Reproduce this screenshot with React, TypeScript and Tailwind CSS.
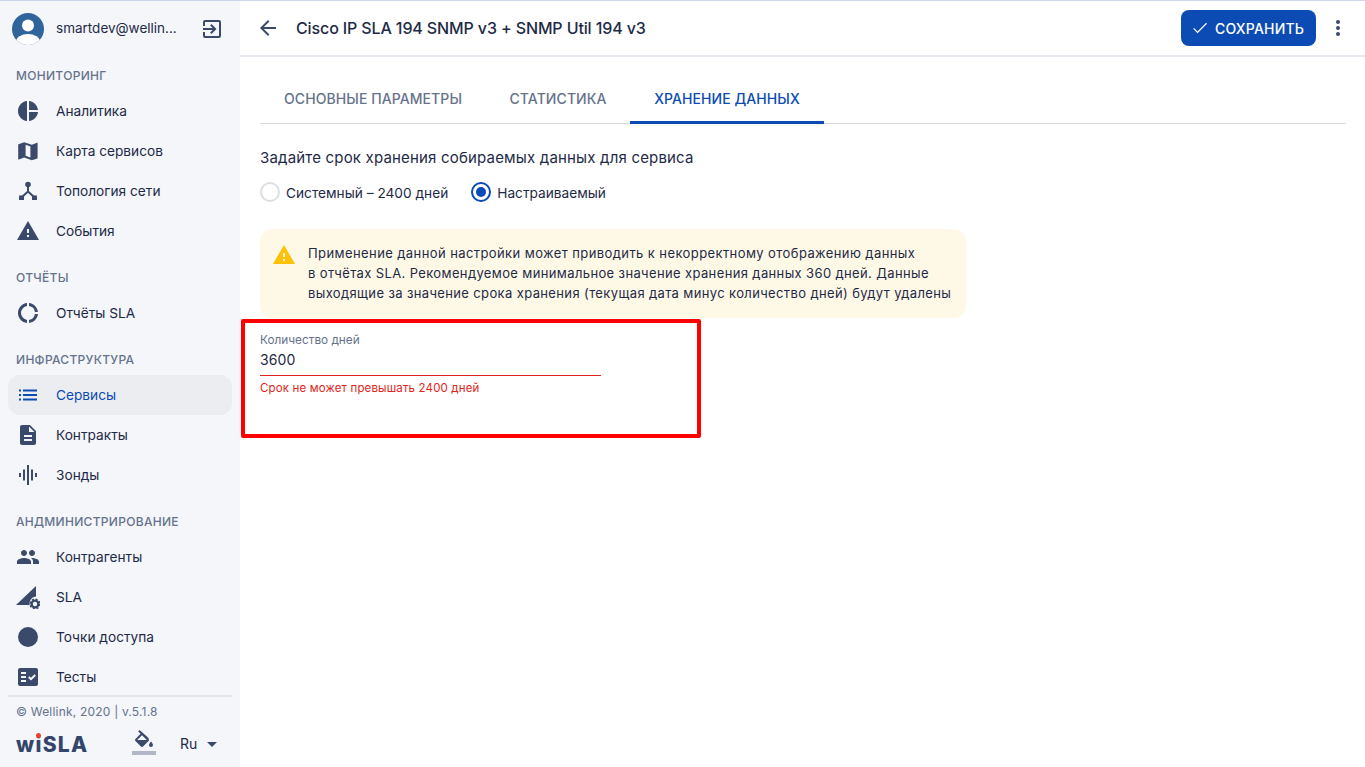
import React from "react";

const C = "#3b4a6b";

const P = ({ d }: { d: string }) => <path d={d} fill={C} />;
const I = ({ children, size = 24 }: { children: React.ReactNode; size?: number }) => (
  <svg width={size} height={size} viewBox="0 0 24 24" className="shrink-0">{children}</svg>
);

const icons: Record<string, React.ReactNode> = {
  pie: <I><P d="M11 2v20c-5.07-.5-9-4.79-9-10s3.93-9.5 9-10zm2.03 0v8.99H22c-.47-4.74-4.24-8.52-8.97-8.99zm0 11.01V22c4.74-.47 8.5-4.25 8.97-8.99h-8.97z" /></I>,
  map: <I><P d="M2.5 5.2 8.2 3.2 15.8 5.8 21 3.8c.3-.1.6.1.6.4V19c0 .2-.1.4-.3.5l-5.5 1.7-7.6-2.7-5.3 2c-.3.1-.7-.1-.7-.5V5.7c0-.2.1-.4.3-.5zM9.6 5.8v11l4.8 1.6V7.4z" /></I>,
  topo: <I><circle cx="12" cy="5.5" r="2.8" fill={C} /><path d="M12 7v5.5M12 12.5 6 18M12 12.5 18 18" stroke={C} strokeWidth="2" fill="none" /><rect x="3" y="16.5" width="5" height="4.5" fill={C} /><rect x="16" y="16.5" width="5" height="4.5" fill={C} /></I>,
  warn: <I><P d="M1 21h22L12 2 1 21zm12-3h-2v-2h2v2zm0-4h-2v-4h2v4z" /></I>,
  donut: <I><path d="M11 2.05v3.02A7 7 0 0 0 5 12a7 7 0 0 0 6 6.93v3.02C5.95 21.45 2 17.19 2 12S5.95 2.55 11 2.05zM13 2.05c4.72.47 8.48 4.23 8.95 8.95h-3.02A7 7 0 0 0 13 5.07V2.05zM18.93 13h3.02c-.47 4.72-4.23 8.48-8.95 8.95v-3.02A7 7 0 0 0 18.93 13z" fill={C} /></I>,
  list: <I><path d="M3 6.5h2v2H3zM3 11h2v2H3zM3 15.5h2v2H3zM7 6.5h14v2H7zM7 11h14v2H7zM7 15.5h14v2H7z" fill="#0b4bb3" /></I>,
  doc: <I><P d="M14 2H6c-1.1 0-2 .9-2 2v16c0 1.1.9 2 2 2h12c1.1 0 2-.9 2-2V8l-6-6zm2 16H8v-2h8v2zm0-4H8v-2h8v2zm-3-5V3.5L18.5 9H13z" /></I>,
  wave: <I><path d="M3 10h2v4H3zM7 6.5h2v11H7zM11 2h2v20h-2zM15 6.5h2v11h-2zM19 10h2v4h-2z" fill={C} /></I>,
  people: <I><P d="M16 11c1.66 0 2.99-1.34 2.99-3S17.66 5 16 5s-3 1.34-3 3 1.34 3 3 3zm-8 0c1.66 0 2.99-1.34 2.99-3S9.66 5 8 5 5 6.34 5 8s1.34 3 3 3zm0 2c-2.33 0-7 1.17-7 3.5V19h14v-2.5C15 14.17 10.33 13 8 13zm8 0c-.29 0-.62.02-.97.05 1.16.84 1.97 1.97 1.97 3.45V19h6v-2.5c0-2.33-4.67-3.5-7-3.5z" /></I>,
  sla: <I><path d="M20 1V11.5a7 7 0 0 0-6.4 8.5H0z" fill={C} /><circle cx="19" cy="19" r="3.4" fill="none" stroke={C} strokeWidth="2.4" /><circle cx="19" cy="19" r="4.8" fill="none" stroke={C} strokeWidth="1.6" strokeDasharray="2 1.77" /></I>,
  circle: <I><circle cx="12" cy="12" r="10" fill={C} /></I>,
  tests: <I><path d="M4 3h16a2 2 0 0 1 2 2v14a2 2 0 0 1-2 2H4a2 2 0 0 1-2-2V5a2 2 0 0 1 2-2z" fill={C} /><path d="M5 7h5v2H5zM5 11h5v2H5zM5 15h5v2H5z" fill="#f4f6f9" /><path d="m12.8 12 2.2 2.2 4.2-4.2" stroke="#f4f6f9" strokeWidth="2" fill="none" /></I>,
};

const Item = ({ icon, label, active }: { icon: string; label: string; active?: boolean }) => (
  <div className={`flex h-10 items-center rounded-xl pl-2 ${active ? "bg-[#ecedf1] text-[#0b4bb3]" : "text-[#1e2a47]"}`}>
    <span className="flex w-10 justify-start">{icons[icon]}</span>
    <span className="text-[13.7px]">{label}</span>
  </div>
);

const Section = ({ title, children }: { title: string; children: React.ReactNode }) => (
  <div>
    <div className="flex h-[22px] items-center pl-2 text-[12px] font-medium tracking-[0.3px] text-[#66728c]">{title}</div>
    <div className="mt-[4px]">{children}</div>
  </div>
);

export default function App() {
  return (
    <div className="relative flex h-[767px] w-[1365px] overflow-hidden border-t-[1px] border-[#c9d5e8] bg-white font-['Inter','Noto_Sans',sans-serif] text-[#1e2a47]">
      <aside className="flex w-[240px] shrink-0 flex-col bg-[#f4f6f9] px-2">
        <div className="flex h-[55px] shrink-0 items-center pl-1">
          <svg width="32" height="32" viewBox="0 0 32 32" className="shrink-0">
            <defs><clipPath id="av"><circle cx="16" cy="16" r="16" /></clipPath></defs>
            <circle cx="16" cy="16" r="16" fill="#2f659c" />
            <g clipPath="url(#av)">
              <circle cx="16" cy="12.5" r="6" fill="#fff" />
              <ellipse cx="16" cy="29" rx="12" ry="8" fill="#fff" />
            </g>
          </svg>
          <span className="ml-3 w-[122px] whitespace-nowrap text-[13.5px]">smartdev@wellin...</span>
          <svg width="24" height="24" viewBox="0 0 24 24" className="ml-[22px] shrink-0">
            <path d="M10.09 15.59 11.5 17l5-5-5-5-1.41 1.41L12.67 11H3v2h9.67l-2.58 2.59zM19 3H5a2 2 0 0 0-2 2v4h2V5h14v14H5v-4H3v4a2 2 0 0 0 2 2h14a2 2 0 0 0 2-2V5a2 2 0 0 0-2-2z" fill={C} />
          </svg>
        </div>
        <div className="mt-[9px] flex flex-col gap-4">
          <Section title="МОНИТОРИНГ">
            <Item icon="pie" label="Аналитика" />
            <Item icon="map" label="Карта сервисов" />
            <Item icon="topo" label="Топология сети" />
            <Item icon="warn" label="События" />
          </Section>
          <Section title="ОТЧЁТЫ">
            <Item icon="donut" label="Отчёты SLA" />
          </Section>
          <Section title="ИНФРАСТРУКТУРА">
            <Item icon="list" label="Сервисы" active />
            <Item icon="doc" label="Контракты" />
            <Item icon="wave" label="Зонды" />
          </Section>
          <Section title="АНДМИНИСТРИРОВАНИЕ">
            <Item icon="people" label="Контрагенты" />
            <Item icon="sla" label="SLA" />
            <Item icon="circle" label="Точки доступа" />
            <Item icon="tests" label="Тесты" />
          </Section>
        </div>
        <div className="mt-[-2px] border-t-2 border-[#e4e6ec] pl-2">
          <div className="mt-[6px] text-[12px] tracking-[0.2px] text-[#66728c]">© Wellink, 2020 | v.5.1.8</div>
          <div className="mt-[7px] flex items-center">
            <span className="relative w-[72px] pt-[1px] text-[21px] leading-[32px] font-extrabold tracking-[1.3px] text-[#34456b]">
              wiSLA
              <span className="absolute left-[20px] top-[5px] h-[5px] w-[5px] rounded-full bg-[#ea4335]" />
            </span>
            <span className="mb-1 ml-[44px] flex w-6 flex-col items-center">
              <svg width="24" height="20" viewBox="0 0 24 20">
                <path d="M16.56 7.94 7.62-.0 6.21 1.41l2.38 2.38-5.15 5.15a1.5 1.5 0 0 0 0 2.12l5.5 5.5c.29.29.68.44 1.06.44s.77-.15 1.06-.44l5.5-5.5c.59-.58.59-1.53 0-2.12zM5.21 10 10 5.21 14.79 10H5.21zM19 11.5s-2 2.17-2 3.5a2 2 0 0 0 4 0c0-1.33-2-3.5-2-3.5z" fill={C} />
                <path d="M4.5 10.5h11l-5.5 5.4z" fill={C} />
              </svg>
              <span className="mt-[1px] h-[4px] w-6 bg-[#b1b7c5]" />
            </span>
            <span className="ml-6 pb-[2px] text-[14px]">Ru</span>
            <svg width="24" height="24" viewBox="0 0 24 24" className="mb-[2px] ml-[3px]"><path d="m7 10 5 5 5-5z" fill={C} /></svg>
          </div>
        </div>
      </aside>

      <main className="flex min-w-0 flex-1 flex-col">
        <header className="flex h-[56px] shrink-0 items-center border-b-2 border-[#e8e9ef] pl-4 pr-[15px]">
          <svg width="24" height="24" viewBox="0 0 24 24" className="shrink-0"><path d="M20 11H7.83l5.59-5.59L12 4l-8 8 8 8 1.41-1.41L7.83 13H20v-2z" fill={C} /></svg>
          <h1 className="ml-4 text-[16px] font-medium tracking-[-0.12px] text-[#1e2a47]">Cisco IP SLA 194 SNMP v3 + SNMP Util 194 v3</h1>
          <div className="ml-auto flex items-center">
            <button className="flex h-9 w-[135px] items-center rounded-lg bg-[#0b4bb3] pl-[9px] text-[14px] font-medium tracking-[0.2px] text-white">
              <svg width="20" height="20" viewBox="0 0 24 24" className="shrink-0"><path d="M9 16.17 4.83 12l-1 1L9 18.2 20.4 6.8l-1-1z" fill="#fff" /></svg>
              <span className="ml-[5px]">СОХРАНИТЬ</span>
            </button>
            <svg width="24" height="24" viewBox="0 0 24 24" className="ml-[10px]"><path d="M12 8a2 2 0 1 0 0-4 2 2 0 0 0 0 4zm0 2a2 2 0 1 0 0 4 2 2 0 0 0 0-4zm0 6a2 2 0 1 0 0 4 2 2 0 0 0 0-4z" fill={C} /></svg>
          </div>
        </header>

        <div className="pl-5 pr-[19px]">
          <nav className="mt-[18px] flex h-[49px] border-b border-[#d9dbe3] text-[14px] leading-[20px] font-medium tracking-[0.08px]">
            <div className="flex w-[226px] items-center justify-center text-[#66728c]">ОСНОВНЫЕ ПАРАМЕТРЫ</div>
            <div className="flex w-[144px] items-center justify-center text-[#66728c]">СТАТИСТИКА</div>
            <div className="flex h-[49px] w-[194px] items-center justify-center border-b-[3px] border-[#0b4bb3] pt-[2px] text-[#0b4bb3]">ХРАНЕНИЕ ДАННЫХ</div>
          </nav>

          <p className="mt-[23px] text-[15px] leading-[22px] tracking-[0.18px]">Задайте срок хранения собираемых данных для сервиса</p>

          <div className="mt-[13px] flex h-5 items-center text-[13.7px]">
            <span className="h-5 w-5 rounded-full border-2 border-[#dcdee5] bg-white" />
            <span className="ml-[6px] pt-[2px]">Системный – 2400 дней</span>
            <span className="ml-[23px] flex h-5 w-5 items-center justify-center rounded-full border-2 border-[#0b4bb3]">
              <span className="h-[10px] w-[10px] rounded-full bg-[#0b4bb3]" />
            </span>
            <span className="ml-[6px] pt-[2px]">Настраиваемый</span>
          </div>

          <div className="mt-[27px] flex h-[89px] w-[706px] rounded-xl bg-[#fef9e7] pl-3 pt-[14px]">
            <svg width="24" height="24" viewBox="0 0 24 24" className="shrink-0"><path d="M1 21h22L12 2 1 21zm12-3h-2v-2h2v2zm0-4h-2v-4h2v4z" fill="#fec106" /></svg>
            <div className="ml-3 text-[13px] leading-[20px] tracking-[0.37px]">
              <span className="tracking-[0.41px]">Применение данной настройки может приводить к некорректному отображению данных</span>
              <br />в отчётах SLA. Рекомендуемое минимальное значение хранения данных 360 дней. Данные
              <br />выходящие за значение срока хранения (текущая дата минус количество дней) будут удалены
            </div>
          </div>

          <div className="mt-[14px] w-[341px]">
            <div className="text-[11.8px] leading-[16px] text-[#66728c]">Количество дней</div>
            <div className="mt-[1px] h-[27px] border-b border-[#e1251b] text-[14px] leading-[22px] tracking-[0.1px]">3600</div>
            <div className="mt-[4px] text-[11.5px] leading-[16px] tracking-[0.15px] text-[#e1251b]">Срок не может превышать 2400 дней</div>
          </div>
        </div>
      </main>

      <div className="absolute left-[241px] top-[318px] h-[119px] w-[460px] rounded-[2px] border-[4px] border-[#ff0000]" />
    </div>
  );
}
